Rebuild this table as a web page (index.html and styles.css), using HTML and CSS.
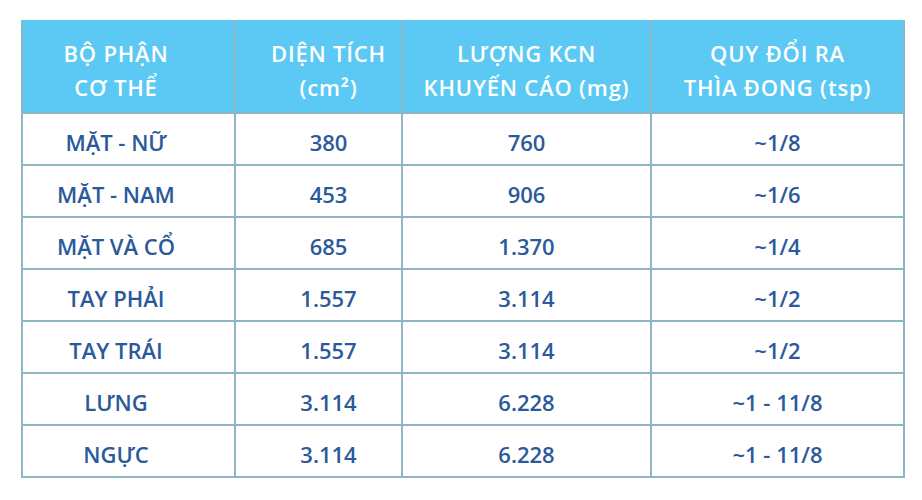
FILE: index.html
```html
<!DOCTYPE html>
<html lang="vi">
<head>
<meta charset="utf-8">
<link rel="stylesheet" href="styles.css">
</head>
<body>
<table class="spf">
  <colgroup>
    <col class="c1"><col class="c2"><col class="c3"><col class="c4">
  </colgroup>
  <thead>
    <tr>
      <th class="k1">BỘ PHẬN<br>CƠ THỂ</th>
      <th class="k2">DIỆN TÍCH<br>(cm²)</th>
      <th>LƯỢNG KCN<br>KHUYẾN CÁO (mg)</th>
      <th>QUY ĐỔI RA<br>THÌA ĐONG (tsp)</th>
    </tr>
  </thead>
  <tbody>
    <tr><td class="k1">MẶT - NỮ</td><td class="k2">380</td><td>760</td><td>~1/8</td></tr>
    <tr><td class="k1">MẶT - NAM</td><td class="k2">453</td><td>906</td><td>~1/6</td></tr>
    <tr><td class="k1">MẶT VÀ CỔ</td><td class="k2">685</td><td>1.370</td><td>~1/4</td></tr>
    <tr><td class="k1">TAY PHẢI</td><td class="k2">1.557</td><td>3.114</td><td>~1/2</td></tr>
    <tr><td class="k1">TAY TRÁI</td><td class="k2">1.557</td><td>3.114</td><td>~1/2</td></tr>
    <tr><td class="k1">LƯNG</td><td class="k2">3.114</td><td>6.228</td><td>~1 - 11/8</td></tr>
    <tr><td class="k1">NGỰC</td><td class="k2">3.114</td><td>6.228</td><td>~1 - 11/8</td></tr>
  </tbody>
</table>
</body>
</html>
```
FILE: styles.css
```css
html, body {
  margin: 0;
  padding: 0;
  background: #ffffff;
}
body {
  padding: 20px 0 0 21px;
  font-family: "Open Sans", Lato, "Liberation Sans", sans-serif;
}
.spf {
  border-collapse: collapse;
  table-layout: fixed;
  width: 882px;
}
.c1 { width: 213px; }
.c2 { width: 167px; }
.c3 { width: 249px; }
.c4 { width: 253px; }
.spf th, .spf td {
  border: 2px solid #8db5c3;
  text-align: center;
  padding: 0;
}
.spf th {
  background: #5bc9f4;
  color: #ffffff;
  font-weight: 600;
  font-size: 22px;
  letter-spacing: 0.8px;
  line-height: 34px;
  height: 84px;
  border-top-color: #5bc9f4;
  padding-top: 6px;
}
.spf td {
  color: #2b5a9c;
  font-weight: 600;
  font-size: 22px;
  line-height: 30px;
  height: 44px;
  padding-top: 6px;
}
.spf .k1 { padding-right: 25px; }
.spf .k2 { padding-left: 20px; }
```
